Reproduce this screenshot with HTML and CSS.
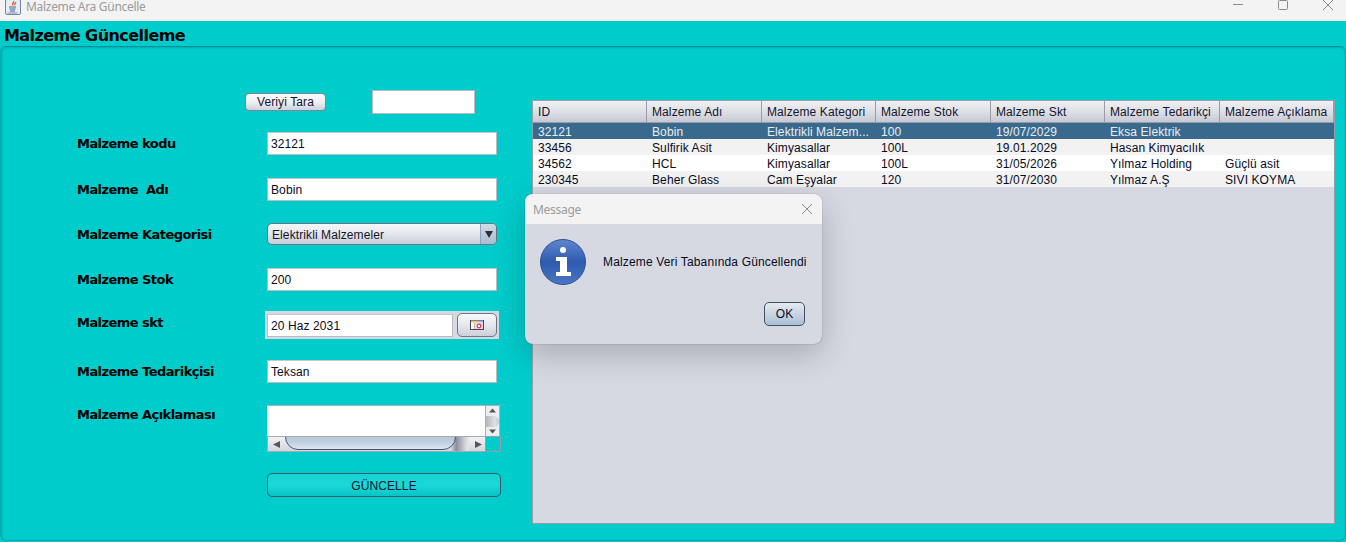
FILE: index.html
```html
<!DOCTYPE html>
<html lang="tr">
<head>
  <meta charset="UTF-8">
  <title>Malzeme Ara Güncelle</title>
  <link rel="stylesheet" href="styles.css">
</head>
<body>
  <div class="titlebar">
    <svg class="app-icon" width="18" height="18" viewBox="0 0 18 18">
      <rect x="1.500" y="0.500" width="15" height="15" rx="1.500" fill="#e6edf6" stroke="#6f86a8"/>
      <path d="M9.500 2c1 1.500-1.800 2.500-.8 4.500M11.500 3c.6 1-1.200 1.800-.8 3.300" fill="none" stroke="#e0682a" stroke-width="1.500"/>
      <path d="M5 8h7M5.500 10h6M6 12h5" stroke="#47648f" stroke-width="1.100"/>
      <path d="M3.500 14h10" stroke="#7d93b3"/>
    </svg>
    <span class="title-text">Malzeme Ara Güncelle</span>
    <div class="win-buttons">
      <svg width="12" height="12" viewBox="0 0 12 12"><path d="M1 5.500h10" stroke="#8a8a8a"/></svg>
      <svg width="12" height="12" viewBox="0 0 12 12"><rect x="1.500" y="1.500" width="9" height="9" rx="1" fill="none" stroke="#8a8a8a"/></svg>
      <svg width="12" height="12" viewBox="0 0 12 12"><path d="M1 1l10 10M11 1L1 11" stroke="#8a8a8a"/></svg>
    </div>
  </div>

  <h1 class="heading">Malzeme Güncelleme</h1>

  <div class="panel">
    <div class="left">
      <div class="scan-row">
        <button class="scan-btn">Veriyi Tara</button>
        <div class="scan-input"></div>
      </div>

      <div class="form">
        <div class="lbl">Malzeme kodu</div>
        <div class="field">32121</div>

        <div class="lbl">Malzeme&nbsp; Adı</div>
        <div class="field">Bobin</div>

        <div class="lbl">Malzeme Kategorisi</div>
        <div class="combo">
          <span class="combo-text">Elektrikli Malzemeler</span>
          <span class="combo-arrow"><svg width="8" height="8" viewBox="0 0 8 8"><path d="M0 1h8L4 8z" fill="#2b2f38"/></svg></span>
        </div>

        <div class="lbl">Malzeme Stok</div>
        <div class="field">200</div>

        <div class="lbl">Malzeme skt</div>
        <div class="date-box">
          <div class="field date-field">20 Haz 2031</div>
          <button class="date-btn">
            <svg width="14" height="10" viewBox="0 0 14 10">
              <rect x="0.500" y="0.500" width="13" height="9" fill="#f8f4ee" stroke="#45454f"/>
              <path d="M1 1.500h6" stroke="#ecc868" stroke-width="2"/>
              <path d="M7 1.500h6" stroke="#9cc0ec" stroke-width="2"/>
              <path d="M4.500 3v6" stroke="#b9b9c0"/>
              <rect x="5" y="3" width="8" height="6" fill="#f6d8dc"/>
              <circle cx="9" cy="6" r="1.800" fill="#fff" stroke="#e03a50" stroke-width="1.200"/>
            </svg>
          </button>
        </div>

        <div class="lbl">Malzeme Tedarikçisi</div>
        <div class="field">Teksan</div>

        <div class="lbl lbl-top">Malzeme Açıklaması</div>
        <div class="scrollbox">
          <div class="area"></div>
          <div class="vbar">
            <svg width="13" height="9" viewBox="0 0 13 9"><path d="M3 6.500h7L6.500 2.500z" fill="#555"/></svg>
            <div class="vthumb"></div>
            <svg width="13" height="9" viewBox="0 0 13 9"><path d="M3 2.500h7L6.500 6.500z" fill="#555"/></svg>
          </div>
          <div class="hbar">
            <svg width="17" height="15" viewBox="0 0 17 15"><path d="M12 4v7L5 7.500z" fill="#555"/></svg>
            <div class="htrack"><div class="hthumb"></div></div>
            <svg width="16" height="15" viewBox="0 0 16 15"><path d="M6 4v7l7-3.500z" fill="#555"/></svg>
          </div>
          <div class="corner"></div>
        </div>

        <div class="spacer"></div>
        <button class="save-btn">GÜNCELLE</button>
      </div>
    </div>

    <div class="table-box">
      <table class="grid">
        <thead>
          <tr>
            <th>ID</th>
            <th>Malzeme Adı</th>
            <th>Malzeme Kategori</th>
            <th>Malzeme Stok</th>
            <th>Malzeme Skt</th>
            <th>Malzeme Tedarikçi</th>
            <th>Malzeme Açıklama</th>
          </tr>
        </thead>
        <tbody>
          <tr class="selected">
            <td>32121</td><td>Bobin</td><td>Elektrikli Malzem...</td><td>100</td><td>19/07/2029</td><td>Eksa Elektrik</td><td></td>
          </tr>
          <tr>
            <td>33456</td><td>Sulfirik Asit</td><td>Kimyasallar</td><td>100L</td><td>19.01.2029</td><td>Hasan Kimyacılık</td><td></td>
          </tr>
          <tr>
            <td>34562</td><td>HCL</td><td>Kimyasallar</td><td>100L</td><td>31/05/2026</td><td>Yılmaz Holding</td><td>Güçlü asit</td>
          </tr>
          <tr>
            <td>230345</td><td>Beher Glass</td><td>Cam Eşyalar</td><td>120</td><td>31/07/2030</td><td>Yılmaz A.Ş</td><td>SIVI KOYMA</td>
          </tr>
        </tbody>
      </table>
    </div>
  </div>

  <div class="dialog">
    <div class="dialog-title">
      <span>Message</span>
      <svg width="12" height="12" viewBox="0 0 12 12"><path d="M1 1l10 10M11 1L1 11" stroke="#8a8a8a"/></svg>
    </div>
    <div class="dialog-body">
      <svg class="info-icon" width="46" height="46" viewBox="0 0 46 46">
        <defs>
          <linearGradient id="infoFill" x1="0" y1="0" x2="0" y2="1">
            <stop offset="0" stop-color="#5f87cf"/>
            <stop offset="0.500" stop-color="#2f5bb0"/>
            <stop offset="1" stop-color="#4a76c4"/>
          </linearGradient>
        </defs>
        <circle cx="23" cy="23" r="22.500" fill="url(#infoFill)" stroke="#2c4f94"/>
        <circle cx="23" cy="11" r="3" fill="#fff"/>
        <path d="M16 18h11v15h4v4H16v-4h4v-11h-4z" fill="#fff"/>
      </svg>
      <div class="dialog-msg">Malzeme Veri Tabanında Güncellendi</div>
    </div>
    <div class="dialog-foot">
      <button class="ok-btn">OK</button>
    </div>
  </div>
</body>
</html>
```

FILE: styles.css
```css
* {
  box-sizing: border-box;
}

html, body {
  margin: 0;
  height: 542px;
  overflow: hidden;
}

body {
  position: relative;
  background: #00cccc;
  font-family: "Liberation Sans", Arial, sans-serif;
  font-size: 12px;
  letter-spacing: 0.1px;
  color: #000;
}

button {
  font-family: inherit;
  font-size: 12px;
  letter-spacing: inherit;
  padding: 0;
  cursor: pointer;
}

/* window title */
.titlebar {
  height: 21px;
  background: #f3f3f3;
  display: flex;
  align-items: center;
  padding-left: 4px;
}

.app-icon {
  margin-top: -6px;
}

.title-text {
  margin-left: 4px;
  margin-top: -8px;
  font-family: "Noto Sans", sans-serif;
  letter-spacing: -0.3px;
  color: #9b9b9b;
}

.win-buttons {
  margin-left: auto;
  margin-top: -11px;
  padding-right: 12px;
  display: flex;
  gap: 33px;
}

.heading {
  margin: 0;
  height: 25px;
  padding: 5px 0 0 4px;
  font-family: "DejaVu Sans", sans-serif;
  font-size: 16px;
  letter-spacing: -0.55px;
  line-height: 19px;
}

.panel {
  height: 495px;
  border: 1px solid #00a5a8;
  border-top-color: #058f95;
  border-left: 2px solid #00adb0;
  border-radius: 6px;
  box-shadow: inset 0 1px 2px rgba(0, 90, 100, 0.25);
  display: flex;
}

/* left side */
.left {
  width: 530px;
  flex: none;
}

.scan-row {
  display: flex;
  align-items: center;
  height: 24px;
  margin-top: 43px;
  padding-left: 243px;
}

.scan-btn {
  width: 81px;
  height: 18px;
  border: 1px solid #7d8696;
  border-radius: 4px;
  background: linear-gradient(#fbfbfc, #f0f0f4 50%, #cfd2dc);
  color: #15152a;
}

.scan-input {
  width: 103px;
  height: 24px;
  margin-left: 46px;
  background: #fff;
  border: 1px solid #b9bcc4;
}

.form {
  display: grid;
  grid-template-columns: 190px 234px;
  grid-template-rows: 46px 45px 45px 43px 49px 45px 68px 24px;
  margin-top: 18px;
  padding-left: 75px;
  align-items: start;
}

.lbl {
  font-family: "DejaVu Sans", sans-serif;
  font-weight: bold;
  font-size: 13px;
  letter-spacing: -0.55px;
  line-height: 23px;
  white-space: nowrap;
}

.lbl-top {
  line-height: 19px;
}

.field {
  width: 230px;
  height: 23px;
  padding-left: 3px;
  line-height: 22px;
  background: #fff;
  border: 1px solid #bcbcc0;
  border-top-color: #c6c6cc;
  color: #0a0a1e;
}

.combo {
  width: 230px;
  height: 22px;
  display: flex;
  border: 1px solid #647586;
  border-radius: 5px;
  background: linear-gradient(#f6f7f9, #e4e6ec 50%, #c8ccd8);
  overflow: hidden;
}

.combo-text {
  flex: 1;
  padding: 1px 0 0 4px;
  line-height: 20px;
  color: #15152a;
}

.combo-arrow {
  width: 16px;
  display: flex;
  align-items: center;
  justify-content: center;
  border-left: 1px solid #8fa2b6;
  background: linear-gradient(#cfdbe7, #a9bdd1);
}

.date-box {
  width: 234px;
  height: 28px;
  margin-left: -2px;
  display: flex;
  align-items: center;
  gap: 4px;
  padding: 0 2px;
  background: #d6d9e0;
}

.date-field {
  width: 186px;
}

.date-btn {
  width: 40px;
  height: 24px;
  display: flex;
  align-items: center;
  justify-content: center;
  border: 1px solid #6f7889;
  border-radius: 5px;
  background: linear-gradient(#f7f8fa, #e6e8ee 50%, #cdd0da);
}

/* text area with its scrollbars */
.scrollbox {
  width: 234px;
  height: 46px;
  display: grid;
  grid-template-columns: 218px 16px;
  grid-template-rows: 30px 16px;
  border-top: 1px solid #aeb0b8;
}

.area {
  background: #fff;
}

.vbar {
  width: 15px;
  display: flex;
  flex-direction: column;
  justify-content: space-between;
  background: #eceef2;
  border: 1px solid #aeb0b8;
  border-top: 0;
  border-bottom: 0;
  overflow: hidden;
}

.vthumb {
  height: 11px;
  width: 13px;
  border-radius: 0 6px 6px 0;
  background: linear-gradient(90deg, #b4b7c1, #dfe1e6 70%, #c4c7d0);
}

.hbar {
  display: flex;
  background: linear-gradient(#f2f3f6, #d4d6de);
  border: 1px solid #a8aab2;
  border-right: 0;
}

.htrack {
  flex: 1;
  overflow: hidden;
  background: linear-gradient(90deg, transparent 90%, #8c8f99 93%, #e0e2e8 99%);
}

.hthumb {
  width: 171px;
  height: 26px;
  margin-top: -13px;
  border: 1px solid #3f5878;
  border-radius: 13px;
  background: linear-gradient(#9fb2ca, #c3d1e2 75%, #dfe7f0);
}

.corner {
  background: transparent;
  border: 1px solid #9c9ca8;
}

.spacer {
  height: 1px;
}

.save-btn {
  width: 234px;
  height: 24px;
  padding-top: 1px;
  border: 1px solid #3e5a66;
  border-radius: 5px;
  background: linear-gradient(#16d2d2, #1cd8d8 50%, #06c4c6);
  color: #08182e;
}

/* table */
.table-box {
  width: 803px;
  height: 424px;
  margin-top: 53px;
  background: #d6d9e2;
  border: 1px solid #9a9ca8;
}

.grid {
  width: 801px;
  table-layout: fixed;
  border-collapse: separate;
  border-spacing: 0;
}

.grid th {
  width: 114px;
  height: 22px;
  padding: 0 0 0 5px;
  text-align: left;
  font-weight: normal;
  color: #15152a;
  background: linear-gradient(#f0f1f4, #dcdee5 55%, #c6c9d4);
  border-right: 1px solid #9a9ca8;
  border-bottom: 1px solid #9a9ca8;
  white-space: nowrap;
  overflow: hidden;
}

.grid th:nth-child(even) {
  width: 115px;
}

.grid td {
  height: 16px;
  padding: 2px 0 0 5px;
  line-height: 14px;
  color: #0a0a1e;
  white-space: nowrap;
  overflow: hidden;
}

.grid tbody tr {
  background: #f2f2f2;
}

.grid tbody tr:nth-child(3) {
  background: #fff;
}

.grid tbody tr.selected {
  background: #396a8d;
}

.grid tr.selected td {
  color: #e8eef3;
}

/* message dialog */
.dialog {
  position: absolute;
  left: 525px;
  top: 194px;
  width: 297px;
  height: 150px;
  background: #d6d9e2;
  border-radius: 8px;
  box-shadow: 0 0 1px rgba(0, 0, 0, 0.5), 0 10px 32px rgba(0, 0, 0, 0.22);
  overflow: hidden;
}

.dialog-title {
  height: 30px;
  padding: 0 9px 0 8px;
  display: flex;
  align-items: center;
  justify-content: space-between;
  background: #f3f3f3;
  font-family: "Noto Sans", sans-serif;
  letter-spacing: -0.3px;
  color: #9b9b9b;
}

.dialog-body {
  display: flex;
  align-items: center;
  padding: 15px 0 0 15px;
}

.dialog-msg {
  margin-left: 17px;
  letter-spacing: 0.15px;
  color: #0a0a1e;
}

.dialog-foot {
  display: flex;
  justify-content: flex-end;
  padding: 17px 17px 0 0;
}

.ok-btn {
  width: 41px;
  height: 24px;
  border: 1px solid #3f5268;
  border-radius: 5px;
  background: linear-gradient(#e4eaf1, #c8d5e3 50%, #a9bfd4);
  color: #0a0a1e;
}
```
